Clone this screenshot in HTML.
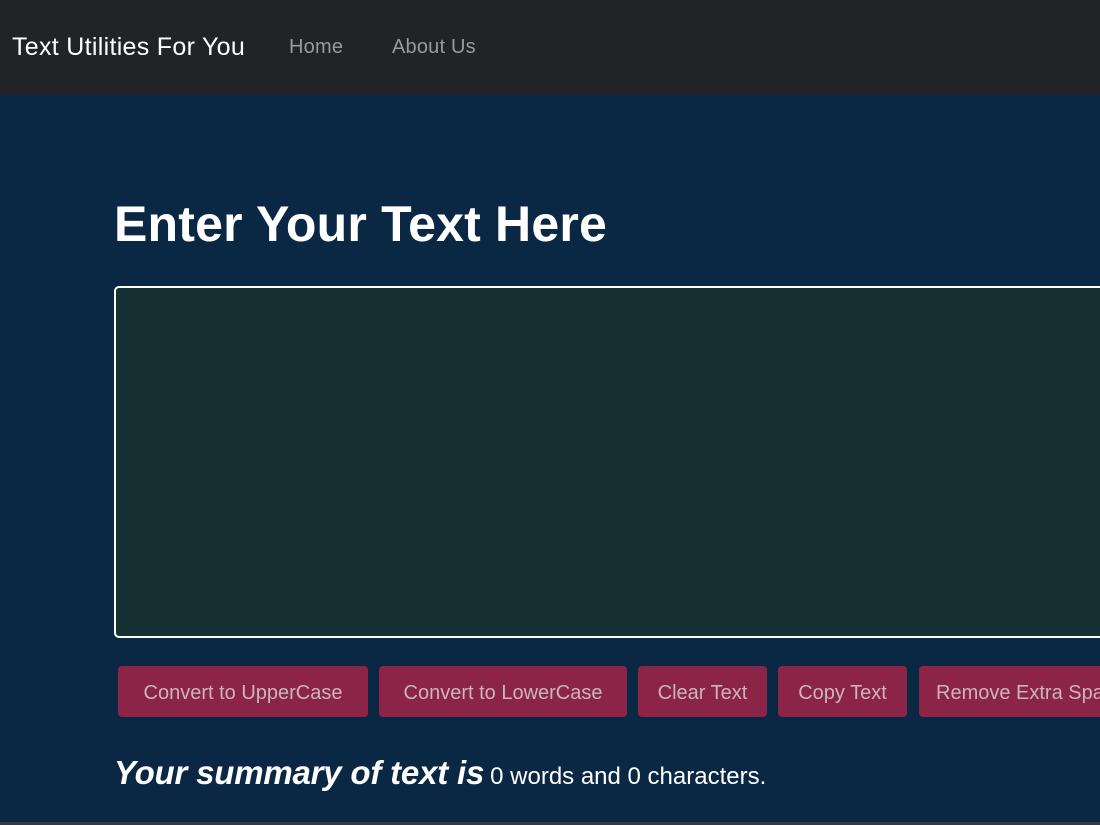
<!DOCTYPE html>
<html><head><meta charset="utf-8"><style>
*{margin:0;padding:0;box-sizing:border-box}
body{width:1100px;height:825px;overflow:hidden;background:#0a2744;font-family:"Liberation Sans",sans-serif;position:relative}
.nav{position:absolute;left:0;top:0;width:1100px;height:95px;background:#222327}
.nav span{position:absolute;white-space:nowrap}
.brand{left:12px;top:33px;color:#fff;font-size:25px;letter-spacing:0.3px}
.link{top:36px;color:#9a9a9e;font-size:20px;letter-spacing:0.2px}
h1{position:absolute;left:114px;top:195px;color:#fff;font-size:50px;font-weight:bold;white-space:nowrap;letter-spacing:0.2px}
.ta{position:absolute;left:114px;top:286px;width:1000px;height:352px;background:#163033;border:2px solid #fff;border-radius:5px}
.btn{position:absolute;top:666px;height:51px;background:#8c2448;border-radius:4px;color:#c9b5bd;font-size:20px;line-height:55px;text-align:center;white-space:nowrap;overflow:hidden}
.sum{position:absolute;left:114px;top:754px;color:#fff;white-space:nowrap}
.sum b{font-style:italic;font-size:33px;letter-spacing:-0.2px;margin-right:6px}
.sum span{font-size:24px;letter-spacing:0px}
.bot{position:absolute;left:0;top:822px;width:1100px;height:3px;background:#333a44}
</style></head><body>
<div class="nav"><span class="brand">Text Utilities For You</span><span class="link" style="left:289px">Home</span><span class="link" style="left:392px">About Us</span></div>
<h1>Enter Your Text Here</h1>
<div class="ta"></div>
<div class="btn" style="left:118px;width:250px">Convert to UpperCase</div>
<div class="btn" style="left:379px;width:248px">Convert to LowerCase</div>
<div class="btn" style="left:638px;width:129px">Clear Text</div>
<div class="btn" style="left:778px;width:129px">Copy Text</div>
<div class="btn" style="left:919px;width:200px;text-align:left;padding-left:17px">Remove Extra Spaces</div>
<div class="sum"><b>Your summary of text is</b><span>0 words and 0 characters.</span></div>
<div class="bot"></div>
</body></html>
